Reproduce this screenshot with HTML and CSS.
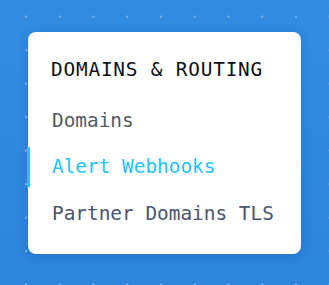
FILE: index.html
```html
<!DOCTYPE html>
<html>
<head>
<meta charset="utf-8">
<link rel="stylesheet" href="styles.css">
</head>
<body>
<div class="stage">
  <nav class="menu">
    <div class="menu-title">DOMAINS &amp; ROUTING</div>
    <ul class="menu-list">
      <li class="menu-item">Domains</li>
      <li class="menu-item active">Alert Webhooks</li>
      <li class="menu-item muted">Partner Domains TLS</li>
    </ul>
  </nav>
</div>
</body>
</html>
```
FILE: styles.css
```css
html, body {
  margin: 0;
  padding: 0;
}
body {
  width: 329px;
  height: 285px;
  overflow: hidden;
  background-color: #2f89e0;
  background-image:
    radial-gradient(circle, rgba(150, 195, 240, 0.75) 0 1.1px, transparent 1.6px),
    linear-gradient(180deg, #318ce2 0%, #2d85dc 100%);
  background-size: 33.75px 33.5px, 100% 100%;
  background-position: 9.1px -0.1px, 0 0;
  font-family: "DejaVu Sans Mono", "Liberation Mono", monospace;
}
.stage {
  padding: 32px 28px 31px 28px;
}
.menu {
  background: #ffffff;
  border-radius: 8px;
  height: 222px;
  box-sizing: border-box;
  padding: 26px 0 0 0;
  box-shadow: 0 2px 10px rgba(20, 60, 130, 0.25);
}
.menu-title {
  padding-left: 23px;
  font-size: 19.4px;
  line-height: 24px;
  letter-spacing: 0.8px;
  color: #0e1114;
  margin-bottom: 18px;
}
.menu-list {
  list-style: none;
  margin: 0;
  padding: 0;
  display: flex;
  flex-direction: column;
  gap: 6.5px;
}
.menu-item {
  height: 40px;
  display: flex;
  align-items: center;
  padding-left: 22px;
  font-size: 19.4px;
  color: #555a60;
  border-left: 3px solid transparent;
  margin-left: -1px;
}
.menu-item.active {
  color: #22c3fb;
  border-left-color: #22c3fb;
}
.menu-item.muted {
  color: #4a5472;
}
```
